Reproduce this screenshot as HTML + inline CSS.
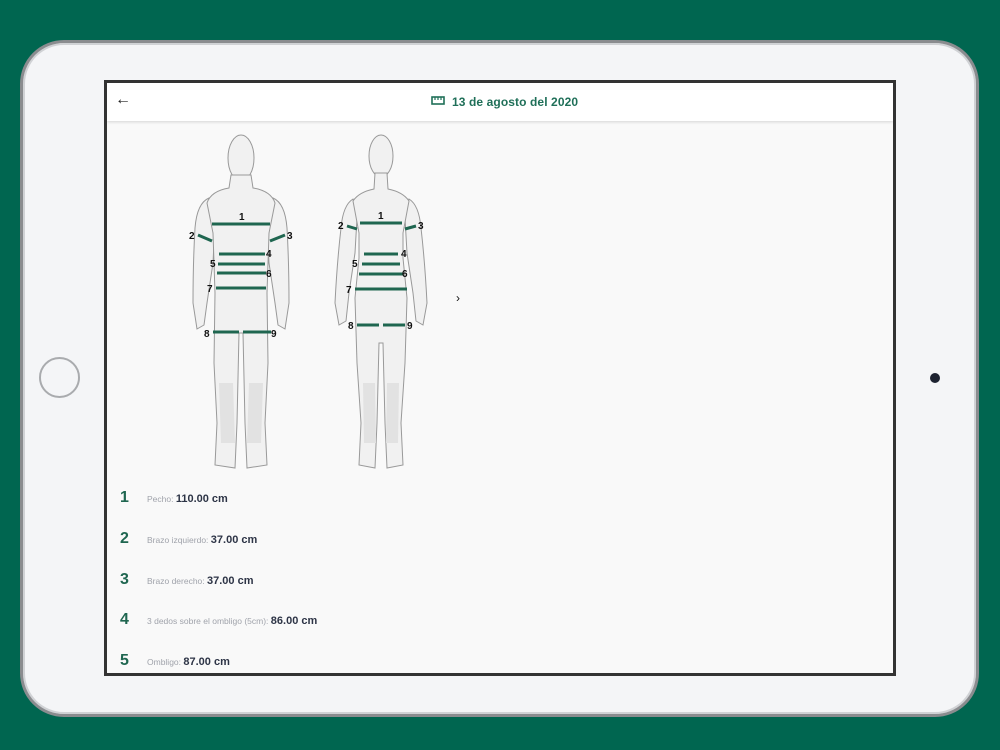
<!DOCTYPE html>
<html><head><meta charset="utf-8"><style>
*{margin:0;padding:0;box-sizing:border-box}
body{width:1000px;height:750px;background:#006650;position:relative;overflow:hidden;font-family:"Liberation Sans",sans-serif}
.ipad{position:absolute;left:20px;top:40px;width:959px;height:677px;border-radius:44px;background:#f4f5f7;border:3px solid #8a8c8f;box-shadow:inset 0 0 0 2px #d0d2d5}
.home{position:absolute;left:39px;top:357px;width:41px;height:41px;border-radius:50%;border:2px solid #a9abae;background:#f4f5f7}
.cam{position:absolute;left:930px;top:373px;width:10px;height:10px;border-radius:50%;background:#1d2230}
.screen{position:absolute;left:104px;top:80px;width:792px;height:596px;background:#333;padding:3px}
.inner{width:100%;height:100%;background:#f9f9f9;position:relative;overflow:hidden}
.hdr{position:absolute;left:0;top:0;right:0;height:38px;background:#fff;box-shadow:0 1px 3px rgba(0,0,0,.15)}
.back{position:absolute;left:8px;top:8px;font-size:16px;color:#222}
.title{position:absolute;top:12px;font-size:12px;font-weight:bold;color:#1f6f58;letter-spacing:.1px}
.row{position:absolute;left:13px;height:20px}
.num{position:absolute;left:0;top:0;font-size:16px;font-weight:bold;color:#1f6650}
.lab{position:absolute;left:27px;top:4px;white-space:nowrap;font-size:8.5px;color:#a0a3ab}
.lab b{font-size:11px;color:#2d3446;font-weight:bold}
</style></head><body>
<div class="ipad"></div>
<div class="home"></div>
<div class="cam"></div>
<div class="screen"><div class="inner">
<div class="hdr"><div class="back">←</div>
<svg style="position:absolute;left:324px;top:13px" width="14" height="9" viewBox="0 0 14 9"><rect x="1" y="1" width="12" height="7" fill="none" stroke="#1f6f58" stroke-width="1.6"/><path d="M4 1v3M7 1v3M10 1v3" stroke="#1f6f58" stroke-width="1.2"/></svg>
<div class="title" style="left:345px">13 de agosto del 2020</div></div>
<svg style="position:absolute;left:0;top:0" width="786" height="400" viewBox="104 80 786 400" font-family="Liberation Sans" font-weight="bold" font-size="10">
<g fill="#f1f1f1" stroke="#999" stroke-width="1">
<!-- male arms -->
<path d="M206 195 Q194 200 192 225 Q190 260 190 300 L194 326 L201 322 L204 300 L210 260 L212 220 Z"/>
<path d="M270 195 Q282 200 284 225 Q286 260 286 300 L282 326 L275 322 L272 300 L266 260 L264 220 Z"/>
<ellipse cx="238" cy="155" rx="13" ry="23"/>
<path d="M228 172 L226 185 Q208 188 204 200 L210 230 L212 290 L211 360 L214 420 L212 462 L232 465 L234 420 L236 330 L240 330 L242 420 L244 465 L264 462 L262 420 L265 360 L264 290 L266 230 L272 200 Q268 188 250 185 L248 172 Z"/>
<!-- female arms -->
<path d="M350 196 Q340 202 338 225 Q334 260 332 300 L336 322 L343 318 L346 290 L352 250 L354 215 Z"/>
<path d="M406 196 Q416 202 418 225 Q422 260 424 300 L420 322 L413 318 L410 290 L404 250 L402 215 Z"/>
<ellipse cx="378" cy="153" rx="12" ry="21"/>
<path d="M372 170 L371 186 Q356 189 350 198 L356 230 L356 255 L352 295 L354 360 L358 420 L356 462 L372 465 L374 420 L376 340 L380 340 L382 420 L384 465 L400 462 L398 420 L402 360 L404 295 L400 255 L400 230 L406 198 Q400 189 385 186 L384 170 Z"/>
</g>
<g fill="#e2e2e2" stroke="none">
<path d="M216 380 L230 380 L232 440 L218 440 Z"/><path d="M246 380 L260 380 L258 440 L244 440 Z"/>
<path d="M360 380 L372 380 L373 440 L361 440 Z"/><path d="M384 380 L396 380 L395 440 L383 440 Z"/>
</g>
<g stroke="#1f6650" stroke-width="3">
<line x1="209" y1="221" x2="267" y2="221"/><line x1="195" y1="232" x2="209" y2="238"/><line x1="267" y1="238" x2="282" y2="232"/>
<line x1="216" y1="251" x2="262" y2="251"/><line x1="215" y1="261" x2="262" y2="261"/><line x1="214" y1="270" x2="263" y2="270"/><line x1="213" y1="285" x2="263" y2="285"/>
<line x1="210" y1="329" x2="236" y2="329"/><line x1="240" y1="329" x2="268" y2="329"/>
<line x1="357" y1="220" x2="399" y2="220"/><line x1="344" y1="223" x2="354" y2="226"/><line x1="402" y1="226" x2="413" y2="223"/>
<line x1="361" y1="251" x2="395" y2="251"/><line x1="359" y1="261" x2="397" y2="261"/><line x1="356" y1="271" x2="400" y2="271"/><line x1="352" y1="286" x2="404" y2="286"/>
<line x1="354" y1="322" x2="376" y2="322"/><line x1="380" y1="322" x2="402" y2="322"/>
</g>
<g fill="#111">
<text x="236" y="217">1</text><text x="186" y="236">2</text><text x="284" y="236">3</text><text x="263" y="254">4</text><text x="207" y="264">5</text><text x="263" y="274">6</text><text x="204" y="289">7</text><text x="201" y="334">8</text><text x="268" y="334">9</text>
<text x="375" y="216">1</text><text x="335" y="226">2</text><text x="415" y="226">3</text><text x="398" y="254">4</text><text x="349" y="264">5</text><text x="399" y="274">6</text><text x="343" y="290">7</text><text x="345" y="326">8</text><text x="404" y="326">9</text>
<text x="453" y="299" font-weight="normal" font-size="12">›</text>
</g>
</svg>
<div class="row" style="top:406px"><div class="num">1</div><div class="lab">Pecho: <b>110.00 cm</b></div></div>
<div class="row" style="top:447px"><div class="num">2</div><div class="lab">Brazo izquierdo: <b>37.00 cm</b></div></div>
<div class="row" style="top:488px"><div class="num">3</div><div class="lab">Brazo derecho: <b>37.00 cm</b></div></div>
<div class="row" style="top:528px"><div class="num">4</div><div class="lab">3 dedos sobre el ombligo (5cm): <b>86.00 cm</b></div></div>
<div class="row" style="top:569px"><div class="num">5</div><div class="lab">Ombligo: <b>87.00 cm</b></div></div>
</div></div>
</body></html>
